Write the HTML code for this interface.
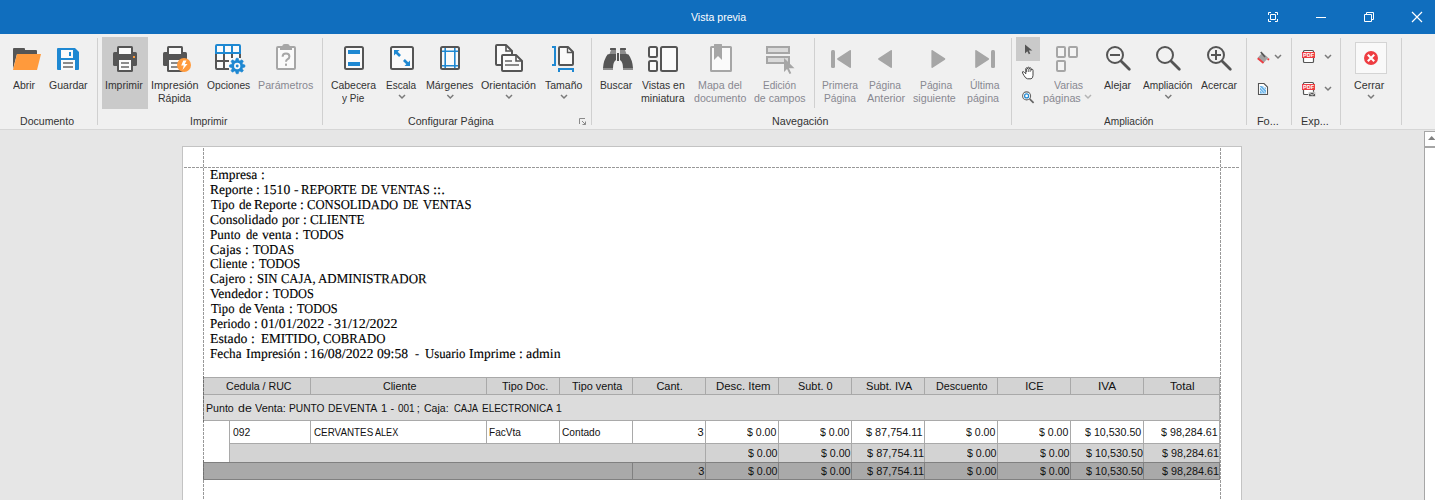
<!DOCTYPE html>
<html lang="es">
<head>
<meta charset="utf-8">
<title>Vista previa</title>
<style>
html,body{margin:0;padding:0;}
body{width:1435px;height:500px;overflow:hidden;position:relative;background:#e6e6e6;font-family:"Liberation Sans",sans-serif;font-size:11px;color:#2b2b2b;}
*{box-sizing:border-box;}
#title{position:absolute;left:0;top:0;width:1435px;height:34px;background:#106ebe;}
svg{position:absolute;top:0;left:0;overflow:visible;}
#ribbon{position:absolute;left:0;top:34px;width:1435px;height:96px;background:#f0f0f0;border-bottom:1px solid #d6d6d6;}
.sep{position:absolute;width:1px;background:#d0d0d0;top:38px;height:87px;}
.sep.s{height:70px;}
.sel{position:absolute;background:#cacaca;}
.s{position:absolute;display:inline-block;transform-origin:0 0;white-space:pre;font-size:11px;line-height:13px;height:13px;letter-spacing:0;}
.lb{color:#333;}
.dis{color:#888890;}
.tt{color:#fff;}
.tx{color:#111;}
#page{position:absolute;left:182px;top:146px;width:1060px;height:400px;background:#fff;border:1px solid #c3c3c3;}
.rl{position:absolute;left:210px;width:400px;height:15px;font-family:"Liberation Serif",serif;font-size:13.65px;line-height:15px;color:#000;white-space:nowrap;letter-spacing:0;word-spacing:0;-webkit-text-stroke:.14px #000;}
.rl span{position:absolute;top:0;display:inline-block;transform-origin:0 0;}
.c{position:absolute;border:1px solid #a9a9a9;}
#sb{position:absolute;left:1424px;top:131px;width:11px;height:369px;background:#fff;border-left:1px solid #a6a6a6;border-top:1px solid #a6a6a6;}
</style>
</head>
<body>
<div id="title">
<svg width="1435" height="34" viewBox="0 0 1435 34" fill="none" stroke="#fff" stroke-width="1">
<path d="M1268.500 15v-2.500h2.500M1275 12.500h2.500v2.500M1277.500 19v2.500h-2.500M1271 21.500h-2.500v-2.500M1270.500 14.500h5v5h-5z"/>
<path d="M1316 17.500h10"/>
<path d="M1364.500 14.500h7v7h-7zM1366.500 14.500v-2h7v7h-2"/>
<path d="M1412 12l10 10M1422 12l-10 10" stroke-width="1.200"/>
</svg>
</div>
<div id="ribbon"></div>
<div class="sep" style="left:97px"></div>
<div class="sep" style="left:322px"></div>
<div class="sep" style="left:591px"></div>
<div class="sep" style="left:1011px"></div>
<div class="sep" style="left:1246px"></div>
<div class="sep" style="left:1291px"></div>
<div class="sep" style="left:1340px"></div>
<div class="sep" style="left:1401px"></div>
<div class="sep s" style="left:814px"></div>
<div class="sel" style="left:102px;top:37px;width:46px;height:72px"></div>
<div class="sel" style="left:1016px;top:37px;width:24px;height:24px"></div>
<div style="position:absolute;left:1355px;top:42px;width:32px;height:32px;background:#f9f9f9;border:1px solid #d4d4d4"></div>
<span class="s tt" style="left:690.99px;top:11px;transform:scaleX(0.961);">Vista previa</span>
<span class="s lb" style="left:12.84px;top:79px;transform:scaleX(0.951);">Abrir</span>
<span class="s lb" style="left:49.41px;top:79px;transform:scaleX(0.956);">Guardar</span>
<span class="s lb" style="left:104.52px;top:79px;transform:scaleX(0.949);">Imprimir</span>
<span class="s lb" style="left:151.29px;top:79px;transform:scaleX(0.986);">Impresión</span>
<span class="s lb" style="left:158.40px;top:91.5px;transform:scaleX(0.952);">Rápida</span>
<span class="s lb" style="left:206.69px;top:79px;transform:scaleX(0.930);">Opciones</span>
<span class="s lb dis" style="left:258.39px;top:79px;transform:scaleX(0.973);">Parámetros</span>
<span class="s lb" style="left:330.85px;top:79px;transform:scaleX(0.946);">Cabecera</span>
<span class="s lb" style="left:342.08px;top:91.5px;transform:scaleX(0.909);">y Pie</span>
<span class="s lb" style="left:386.03px;top:79px;transform:scaleX(0.907);">Escala</span>
<span class="s lb" style="left:426.40px;top:79px;transform:scaleX(0.968);">Márgenes</span>
<span class="s lb" style="left:481.27px;top:79px;transform:scaleX(0.975);">Orientación</span>
<span class="s lb" style="left:544.72px;top:79px;transform:scaleX(0.954);">Tamaño</span>
<span class="s lb" style="left:600.02px;top:79px;transform:scaleX(0.937);">Buscar</span>
<span class="s lb" style="left:641.85px;top:79px;transform:scaleX(0.948);">Vistas en</span>
<span class="s lb" style="left:641.47px;top:91.5px;transform:scaleX(0.962);">miniatura</span>
<span class="s lb dis" style="left:697.91px;top:79px;transform:scaleX(0.971);">Mapa del</span>
<span class="s lb dis" style="left:693.91px;top:91.5px;transform:scaleX(0.961);">documento</span>
<span class="s lb dis" style="left:763.44px;top:79px;transform:scaleX(0.915);">Edición</span>
<span class="s lb dis" style="left:754.30px;top:91.5px;transform:scaleX(0.958);">de campos</span>
<span class="s lb dis" style="left:821.92px;top:79px;transform:scaleX(0.936);">Primera</span>
<span class="s lb dis" style="left:823.92px;top:91.5px;transform:scaleX(0.930);">Página</span>
<span class="s lb dis" style="left:868.92px;top:79px;transform:scaleX(0.930);">Página</span>
<span class="s lb dis" style="left:866.94px;top:91.5px;transform:scaleX(0.992);">Anterior</span>
<span class="s lb dis" style="left:919.69px;top:79px;transform:scaleX(0.938);">Página</span>
<span class="s lb dis" style="left:913.13px;top:91.5px;transform:scaleX(0.972);">siguiente</span>
<span class="s lb dis" style="left:969.67px;top:79px;transform:scaleX(0.947);">Última</span>
<span class="s lb dis" style="left:967.29px;top:91.5px;transform:scaleX(0.969);">página</span>
<span class="s lb dis" style="left:1053.83px;top:79px;transform:scaleX(0.959);">Varias</span>
<span class="s lb dis" style="left:1043.39px;top:91.5px;transform:scaleX(0.980);">páginas</span>
<span class="s lb" style="left:1103.80px;top:79px;transform:scaleX(0.965);">Alejar</span>
<span class="s lb" style="left:1142.88px;top:79px;transform:scaleX(0.920);">Ampliación</span>
<span class="s lb" style="left:1200.89px;top:79px;transform:scaleX(0.950);">Acercar</span>
<span class="s lb" style="left:1354.32px;top:79px;transform:scaleX(0.969);">Cerrar</span>
<span class="s lb" style="left:19.99px;top:115px;transform:scaleX(0.960);">Documento</span>
<span class="s lb" style="left:190.28px;top:115px;transform:scaleX(0.941);">Imprimir</span>
<span class="s lb" style="left:408.42px;top:115px;transform:scaleX(0.967);">Configurar Página</span>
<span class="s lb" style="left:771.95px;top:115px;transform:scaleX(0.972);">Navegación</span>
<span class="s lb" style="left:1103.88px;top:115px;transform:scaleX(0.920);">Ampliación</span>
<span class="s lb" style="left:1256.90px;top:115px;">Fo...</span>
<span class="s lb" style="left:1300.91px;top:115px;transform:scaleX(0.984);">Exp...</span>

<svg width="1435" height="130" viewBox="0 0 1435 130">
<path d="M399 95.0l3 3 3-3" fill="none" stroke="#7a7a7a" stroke-width="1.5"/>
<path d="M447.3 95.0l3 3 3-3" fill="none" stroke="#7a7a7a" stroke-width="1.5"/>
<path d="M506 95.0l3 3 3-3" fill="none" stroke="#7a7a7a" stroke-width="1.5"/>
<path d="M561 95.0l3 3 3-3" fill="none" stroke="#7a7a7a" stroke-width="1.5"/>
<path d="M1165.3 95.0l3 3 3-3" fill="none" stroke="#7a7a7a" stroke-width="1.5"/>
<path d="M1368 95.0l3 3 3-3" fill="none" stroke="#7a7a7a" stroke-width="1.5"/>
<path d="M1085 95.0l3 3 3-3" fill="none" stroke="#b4b4b4" stroke-width="1.5"/>
<path d="M1275 55.0l3 3 3-3" fill="none" stroke="#7a7a7a" stroke-width="1.5"/>
<path d="M1325 55.0l3 3 3-3" fill="none" stroke="#7a7a7a" stroke-width="1.5"/>
<path d="M1325 87.0l3 3 3-3" fill="none" stroke="#7a7a7a" stroke-width="1.5"/>
<path d="M579.500 124v-5.500h5.500M582 121l3.500 3.500M585.500 121.500v3h-3" fill="none" stroke="#8a8a8a" stroke-width="1"/>
<path d="M13 69V49q0-1 1-1h10q1 0 1 1v1h11q1 0 1 1v3H17z" fill="#555555"/>
<path d="M13 70l4-16h24l-4 16z" fill="#ff9a3c"/>
<path d="M58 48h17l4 4v17q0 1-1 1H58q-1 0-1-1V49q0-1 1-1z" fill="#1e88d2"/>
<rect x="61" y="50" width="12" height="8" fill="#fafafa"/><rect x="69" y="52" width="2" height="4" fill="#1e88d2"/>
<rect x="61" y="60" width="14" height="10" fill="#fafafa"/><rect x="63" y="62" width="10" height="2" fill="#8a8a8a"/><rect x="63" y="66" width="10" height="2" fill="#8a8a8a"/>
<g transform="translate(113 0)">
<rect x="0" y="52" width="24" height="14" rx="1.500" fill="#555555"/>
<rect x="4" y="46" width="16" height="9" rx="1.500" fill="#555555"/><rect x="6" y="48" width="12" height="6" fill="#fafafa"/>
<rect x="4" y="58" width="16" height="14" rx="1.500" fill="#555555"/><rect x="6" y="60" width="12" height="10" fill="#fafafa"/>
<rect x="8" y="62" width="8" height="2" fill="#8a8a8a"/><rect x="8" y="66" width="8" height="2" fill="#8a8a8a"/>
</g>
<rect x="133" y="56" width="2" height="2" fill="#ff9a3c"/>
<g transform="translate(163 0)">
<rect x="0" y="52" width="24" height="14" rx="1.500" fill="#555555"/>
<rect x="4" y="46" width="16" height="9" rx="1.500" fill="#555555"/><rect x="6" y="48" width="12" height="6" fill="#fafafa"/>
<rect x="4" y="58" width="16" height="14" rx="1.500" fill="#555555"/><rect x="6" y="60" width="12" height="10" fill="#fafafa"/>
<rect x="8" y="62" width="8" height="2" fill="#8a8a8a"/><rect x="8" y="66" width="8" height="2" fill="#8a8a8a"/>
</g>
<circle cx="184" cy="65" r="7" fill="#ff9a3c"/><path d="M183.300 60.500h3.200l-1.700 3.400h2.700l-5 6.200 1.300-4.600h-2.600z" fill="#fff"/>
<rect x="216" y="45" width="24" height="24" fill="#fafafa"/>
<path d="M216 54v14q0 1 1 1h12M224 54v15M216 61h13M232 54v4M240 54v4" fill="none" stroke="#555555" stroke-width="2"/>
<path d="M217 45h22q1 0 1 1v7h-24v-7q0-1 1-1zM224 45v8M232 45v8" fill="none" stroke="#1e88d2" stroke-width="2"/>
<path d="M235.52 60.55L236.19 58.27L238.21 58.27L238.88 60.55L239.86 60.96L241.95 59.82L243.38 61.25L242.24 63.34L242.65 64.32L244.93 64.99L244.93 67.01L242.65 67.68L242.24 68.66L243.38 70.75L241.95 72.18L239.86 71.04L238.88 71.45L238.21 73.73L236.19 73.73L235.52 71.45L234.54 71.04L232.45 72.18L231.02 70.75L232.16 68.66L231.75 67.68L229.47 67.01L229.47 64.99L231.75 64.32L232.16 63.34L231.02 61.25L232.45 59.82L234.54 60.96z" fill="#1e88d2" stroke="#1e88d2" stroke-width=".6" stroke-linejoin="round"/>
<circle cx="237.200" cy="66" r="2.300" fill="none" stroke="#fafafa" stroke-width="1.700"/>
<rect x="277" y="47" width="18" height="22" rx="1" fill="#fafafa" stroke="#a6a6a6" stroke-width="2"/>
<path d="M280 50v-2.500q0-.5.500-.5h1.700q0-3 2.500-3h2.600q2.500 0 2.500 3h1.700q.5 0 .5.500v2.500z" fill="#a6a6a6"/>
<path d="M282.600 56.800q0-3.300 3.400-3.300t3.400 3q0 1.700-1.700 2.600t-1.700 2.700" fill="none" stroke="#a6a6a6" stroke-width="2"/><rect x="285" y="63.600" width="2" height="2.200" fill="#a6a6a6"/>
<rect x="345" y="47" width="18" height="22" rx="1.500" fill="#fafafa" stroke="#555555" stroke-width="2"/>
<rect x="348" y="50" width="12" height="4" fill="#1e88d2"/><rect x="348" y="62" width="12" height="4" fill="#1e88d2"/>
<rect x="391" y="47" width="22" height="22" rx="1.500" fill="#fafafa" stroke="#555555" stroke-width="2"/>
<path d="M394 50h5.500l-1.800 1.800 3.300 3.300-1.900 1.900-3.300-3.300-1.800 1.800zM410 66h-5.500l1.800-1.800-3.300-3.300 1.900-1.900 3.300 3.300 1.800-1.800z" fill="#1e88d2"/>
<rect x="441" y="47" width="18" height="22" rx="1.500" fill="#fafafa" stroke="#555555" stroke-width="2"/>
<path d="M445.200 48v20M454.800 48v20M442 51.200h16M442 65.800h16" fill="none" stroke="#1e88d2" stroke-width="1.600"/>
<path d="M497 45h9l6 6v13q0 1-1 1h-14q-1 0-1-1V46q0-1 1-1z" fill="#fafafa" stroke="#555555" stroke-width="2" stroke-linejoin="round"/><path d="M506 45v6h6" fill="none" stroke="#555555" stroke-width="1.600"/>
<path d="M503 55h13l6 6v9q0 1-1 1h-18q-1 0-1-1V56q0-1 1-1z" fill="#fafafa" stroke="#555555" stroke-width="2" stroke-linejoin="round"/><path d="M516 55v6h6" fill="none" stroke="#555555" stroke-width="1.600"/>
<rect x="505" y="60" width="7" height="2" fill="#8a8a8a"/><rect x="505" y="64" width="14" height="2" fill="#8a8a8a"/>
<path d="M560 47h8l5 5v12q0 1-1 1h-12q-1 0-1-1V48q0-1 1-1z" fill="#fafafa" stroke="#555555" stroke-width="2" stroke-linejoin="round"/><path d="M567.500 47v5.500h5.500" fill="none" stroke="#555555" stroke-width="1.400"/>
<path d="M552 47h3v18h-3M559 72v-3h14v3" fill="none" stroke="#1e88d2" stroke-width="2"/>
<g transform="">
<rect x="610" y="48" width="6" height="2" rx=".5" fill="#555555"/>
<path d="M611 50h5v4h-6.500z" fill="#8c8c8c"/>
<path d="M609.500 54h6.500v6q-3 2-3 8h-10q.5-8 4.500-13.500q.8-.5 2-.5z" fill="#555555"/>
<rect x="603" y="68" width="10" height="2" fill="#8c8c8c"/>
</g>
<g transform="translate(1236 0) scale(-1 1)">
<rect x="610" y="48" width="6" height="2" rx=".5" fill="#555555"/>
<path d="M611 50h5v4h-6.500z" fill="#8c8c8c"/>
<path d="M609.500 54h6.500v6q-3 2-3 8h-10q.5-8 4.500-13.500q.8-.5 2-.5z" fill="#555555"/>
<rect x="603" y="68" width="10" height="2" fill="#8c8c8c"/>
</g>
<rect x="617" y="53" width="2" height="8" fill="#555555"/>
<rect x="649" y="47" width="8" height="10" rx="1.500" fill="#fafafa" stroke="#555555" stroke-width="2"/>
<rect x="649" y="61" width="8" height="10" rx="1.500" fill="#fafafa" stroke="#555555" stroke-width="2"/>
<rect x="661" y="47" width="16" height="24" rx="1.500" fill="#fafafa" stroke="#555555" stroke-width="2"/>
<rect x="711" y="47" width="20" height="24" rx=".5" fill="#fafafa" stroke="#a6a6a6" stroke-width="2"/>
<path d="M714 44.500q0-.5.500-.5h7q.5 0 .5.500V60l-4-4-4 4z" fill="#a6a6a6"/>
<rect x="767" y="47" width="22" height="6" fill="#dadada" stroke="#a6a6a6" stroke-width="2"/>
<rect x="767" y="57" width="22" height="6" fill="#dadada" stroke="#a6a6a6" stroke-width="2"/>
<path d="M784 58v14l3-3 2.500 5 1.800-.8-2.400-5h5.600z" fill="#a6a6a6"/>
<rect x="831" y="50" width="4" height="18" rx="1.500" fill="#a6a6a6"/>
<path d="M837.9000000000001 59l12.300-8.200v16.400z" fill="#a6a6a6" stroke="#a6a6a6" stroke-width="1.600" stroke-linejoin="round"/>
<path d="M878.9000000000001 59l12.300-8.200v16.400z" fill="#a6a6a6" stroke="#a6a6a6" stroke-width="1.600" stroke-linejoin="round"/>
<path d="M944.5 59l-12.300-8.200v16.400z" fill="#a6a6a6" stroke="#a6a6a6" stroke-width="1.600" stroke-linejoin="round"/>
<path d="M988.3 59l-12.300-8.200v16.400z" fill="#a6a6a6" stroke="#a6a6a6" stroke-width="1.600" stroke-linejoin="round"/>
<rect x="991" y="50" width="4" height="18" rx="1.500" fill="#a6a6a6"/>
<path d="M1025 44.500v9l2.300-2.200 1.500 3 1.500-.7-1.500-3h3.500z" fill="#555555"/>
<path d="M1024.500 72.500q-1.500-1.500-2-.7t1.500 3.700q1.500 3 3.500 3.300h3.500q2-.5 2-3.500v-5q0-1-.9-1t-.9 1v-1.500q0-1-.9-1t-.9 1v-.600q0-1-.9-1t-.9 1v.600q0-1-.9-1t-.9 1v5z" fill="#fff" stroke="#444" stroke-width="1"/>
<path d="M1026.500 69v3M1028.300 68.500v3.500M1030.100 69v3" fill="none" stroke="#444" stroke-width=".8"/>
<path d="M1029.600 98.900l4 4" stroke="#666" stroke-width="1.700" fill="none"/><circle cx="1026.600" cy="95.900" r="4" fill="#fff" stroke="#666" stroke-width="1.100"/><circle cx="1026.600" cy="95.900" r="2" fill="none" stroke="#1e88d2" stroke-width="1.200"/>
<rect x="1057" y="47" width="8" height="10" rx="1" fill="#f4f4f4" stroke="#a6a6a6" stroke-width="2"/>
<rect x="1069" y="47" width="8" height="10" rx="1" fill="#f4f4f4" stroke="#a6a6a6" stroke-width="2"/>
<rect x="1057" y="61" width="8" height="10" rx="1" fill="#f4f4f4" stroke="#a6a6a6" stroke-width="2"/>
<path d="M1121 61l8.300 8.300" stroke="#555555" stroke-width="2.800" stroke-linecap="round" fill="none"/>
<circle cx="1115" cy="55" r="8" fill="#f2f2f2" stroke="#555555" stroke-width="2"/>
<rect x="1110" y="54" width="10" height="2" fill="#555555"/>
<path d="M1171 61l8.300 8.300" stroke="#555555" stroke-width="2.800" stroke-linecap="round" fill="none"/>
<circle cx="1165" cy="55" r="8" fill="#f2f2f2" stroke="#555555" stroke-width="2"/>
<path d="M1222 61l8.300 8.300" stroke="#555555" stroke-width="2.800" stroke-linecap="round" fill="none"/>
<circle cx="1216" cy="55" r="8" fill="#f2f2f2" stroke="#555555" stroke-width="2"/>
<rect x="1211" y="54" width="10" height="2" fill="#555555"/>
<rect x="1215" y="50" width="2" height="10" fill="#555555"/>
<path d="M1262.300 52.800l6 5-4.800 5.200-6-5z" fill="#a2a2a2"/><path d="M1260.800 52l4.200 5" stroke="#555555" stroke-width="1.600" fill="none"/><path d="M1257.700 58.200l5.800 4.800" stroke="#ee3d42" stroke-width="1.800" fill="none"/><circle cx="1268.300" cy="59.300" r="1.100" fill="#ee3d42"/>
<path d="M1258.500 83.500h5.500l3.500 3.500v7.500h-9z" fill="#fff" stroke="#555555" stroke-width="1.100"/><path d="M1260 86h3.500v1.500h2.500v6h-6z" fill="#6ab4ea"/><path d="M1260 87l5.500 6M1260 90l3 3.500M1262.500 86l3.500 4" stroke="#fff" stroke-width=".7" fill="none"/>
<rect x="1303.500" y="50.5" width="10" height="12" rx="1" fill="#fff" stroke="#555555" stroke-width="1.200"/>
<rect x="1302" y="52" width="13" height="6" fill="#ee3d42"/>
<text x="1308.500" y="57.2" font-family="Liberation Sans,sans-serif" font-size="5.500" font-weight="bold" fill="#fff" text-anchor="middle" textLength="11" lengthAdjust="spacingAndGlyphs">PDF</text>
<rect x="1303.500" y="82.5" width="10" height="12" rx="1" fill="#fff" stroke="#555555" stroke-width="1.200"/>
<rect x="1302" y="84" width="13" height="6" fill="#ee3d42"/>
<text x="1308.500" y="89.2" font-family="Liberation Sans,sans-serif" font-size="5.500" font-weight="bold" fill="#fff" text-anchor="middle" textLength="11" lengthAdjust="spacingAndGlyphs">PDF</text>
<rect x="1308.600" y="92.2" width="7" height="4.500" fill="#555555" stroke="#f0f0f0" stroke-width=".8"/><path d="M1309 92.9l3.100 2.200 3.100-2.200" stroke="#fff" stroke-width=".8" fill="none"/>
<circle cx="1371" cy="58" r="7" fill="#ee3d42"/><path d="M1367.800 54.800l6.400 6.400M1374.200 54.800l-6.400 6.400" stroke="#fff" stroke-width="2.100" fill="none"/>
</svg>
<div id="page"></div>
<div class="rl" style="top:167.12px"><span style="left:-0.22px;transform:matrix(0.992,.002,0,1,0,0);">Empresa</span> <span style="left:51.20px;transform:matrix(1.000,.002,0,1,0,0);">:</span></div>
<div class="rl" style="top:182.12px"><span style="left:-0.24px;transform:matrix(0.988,.002,0,1,0,0);">Reporte</span> <span style="left:46.20px;transform:matrix(1.000,.002,0,1,0,0);">:</span> <span style="left:52.91px;transform:matrix(0.998,.002,0,1,0,0);">1510</span> <span style="left:83.70px;transform:matrix(1.000,.002,0,1,0,0);">-</span> <span style="left:91.08px;transform:matrix(0.934,.002,0,1,0,0);">REPORTE</span> <span style="left:150.76px;transform:matrix(0.911,.002,0,1,0,0);">DE</span> <span style="left:171.02px;transform:matrix(0.925,.002,0,1,0,0);">VENTAS</span> <span style="left:222.72px;transform:matrix(1.075,.002,0,1,0,0);">::.</span></div>
<div class="rl" style="top:197.12px"><span style="left:0.74px;transform:matrix(0.928,.002,0,1,0,0);">Tipo</span> <span style="left:28.52px;transform:matrix(0.970,.002,0,1,0,0);">de</span> <span style="left:44.14px;transform:matrix(0.988,.002,0,1,0,0);">Reporte</span> <span style="left:90.20px;transform:matrix(1.000,.002,0,1,0,0);">:</span> <span style="left:97.44px;transform:matrix(0.926,.002,0,1,0,0);">CONSOLIDADO</span> <span style="left:192.98px;transform:matrix(0.850,.002,0,1,0,0);">DE</span> <span style="left:212.64px;transform:matrix(0.922,.002,0,1,0,0);">VENTAS</span></div>
<div class="rl" style="top:212.12px"><span style="left:0.01px;transform:matrix(0.985,.002,0,1,0,0);">Consolidado</span> <span style="left:71.52px;transform:matrix(0.945,.002,0,1,0,0);">por</span> <span style="left:93.13px;transform:matrix(1.000,.002,0,1,0,0);">:</span> <span style="left:100.40px;transform:matrix(0.961,.002,0,1,0,0);">CLIENTE</span></div>
<div class="rl" style="top:227.12px"><span style="left:-0.05px;transform:matrix(0.962,.002,0,1,0,0);">Punto</span> <span style="left:35.51px;transform:matrix(0.929,.002,0,1,0,0);">de</span> <span style="left:51.53px;transform:matrix(1.000,.002,0,1,0,0);">venta</span> <span style="left:85.30px;transform:matrix(1.000,.002,0,1,0,0);">:</span> <span style="left:92.81px;transform:matrix(0.906,.002,0,1,0,0);">TODOS</span></div>
<div class="rl" style="top:242.12px"><span style="left:0.35px;transform:matrix(1.033,.002,0,1,0,0);">Cajas</span> <span style="left:35.40px;transform:matrix(1.000,.002,0,1,0,0);">:</span> <span style="left:43.05px;transform:matrix(0.912,.002,0,1,0,0);">TODAS</span></div>
<div class="rl" style="top:256.12px"><span style="left:0.22px;transform:matrix(0.946,.002,0,1,0,0);">Cliente</span> <span style="left:41.30px;transform:matrix(1.000,.002,0,1,0,0);">:</span> <span style="left:49.03px;transform:matrix(0.912,.002,0,1,0,0);">TODOS</span></div>
<div class="rl" style="top:271.12px"><span style="left:0.36px;transform:matrix(0.977,.002,0,1,0,0);">Cajero</span> <span style="left:39.30px;transform:matrix(1.000,.002,0,1,0,0);">:</span> <span style="left:47.35px;transform:matrix(0.935,.002,0,1,0,0);">SIN</span> <span style="left:71.41px;transform:matrix(0.920,.002,0,1,0,0);">CAJA,</span> <span style="left:108.26px;transform:matrix(0.950,.002,0,1,0,0);">ADMINISTRADOR</span></div>
<div class="rl" style="top:286.12px"><span style="left:0.44px;transform:matrix(0.998,.002,0,1,0,0);">Vendedor</span> <span style="left:55.30px;transform:matrix(1.000,.002,0,1,0,0);">:</span> <span style="left:63.33px;transform:matrix(0.901,.002,0,1,0,0);">TODOS</span></div>
<div class="rl" style="top:301.12px"><span style="left:0.74px;transform:matrix(0.928,.002,0,1,0,0);">Tipo</span> <span style="left:28.52px;transform:matrix(0.970,.002,0,1,0,0);">de</span> <span style="left:44.41px;transform:matrix(0.982,.002,0,1,0,0);">Venta</span> <span style="left:79.30px;transform:matrix(1.000,.002,0,1,0,0);">:</span> <span style="left:86.92px;transform:matrix(0.900,.002,0,1,0,0);">TODOS</span></div>
<div class="rl" style="top:316.12px"><span style="left:0.08px;transform:matrix(0.948,.002,0,1,0,0);">Periodo</span> <span style="left:44.30px;transform:matrix(1.000,.002,0,1,0,0);">:</span> <span style="left:50.57px;transform:matrix(1.016,.002,0,1,0,0);">01/01/2022</span> <span style="left:117.57px;transform:matrix(0.746,.002,0,1,0,0);">-</span> <span style="left:124.34px;transform:matrix(1.021,.002,0,1,0,0);">31/12/2022</span></div>
<div class="rl" style="top:331.12px"><span style="left:0.39px;transform:matrix(1.006,.002,0,1,0,0);">Estado</span> <span style="left:41.20px;transform:matrix(1.000,.002,0,1,0,0);">:</span> <span style="left:51.31px;transform:matrix(0.967,.002,0,1,0,0);">EMITIDO,</span> <span style="left:113.43px;transform:matrix(0.937,.002,0,1,0,0);">COBRADO</span></div>
<div class="rl" style="top:346.12px"><span style="left:0.28px;transform:matrix(0.971,.002,0,1,0,0);">Fecha</span> <span style="left:35.72px;transform:matrix(0.986,.002,0,1,0,0);">Impresión</span> <span style="left:94.10px;transform:matrix(1.000,.002,0,1,0,0);">:</span> <span style="left:100.05px;transform:matrix(1.022,.002,0,1,0,0);">16/08/2022</span> <span style="left:167.27px;transform:matrix(0.997,.002,0,1,0,0);">09:58</span> <span style="left:204.98px;transform:matrix(0.905,.002,0,1,0,0);">-</span> <span style="left:214.61px;transform:matrix(0.937,.002,0,1,0,0);">Usuario</span> <span style="left:259.44px;transform:matrix(0.989,.002,0,1,0,0);">Imprime</span> <span style="left:309.30px;transform:matrix(1.000,.002,0,1,0,0);">:</span> <span style="left:316.02px;transform:matrix(1.013,.002,0,1,0,0);">admin</span></div>
<div class="c" style="left:203px;top:377px;width:108px;height:18px;background:#d3d3d3;"></div>
<div class="c" style="left:310px;top:377px;width:177px;height:18px;background:#d3d3d3;"></div>
<div class="c" style="left:486px;top:377px;width:74px;height:18px;background:#d3d3d3;"></div>
<div class="c" style="left:559px;top:377px;width:74px;height:18px;background:#d3d3d3;"></div>
<div class="c" style="left:632px;top:377px;width:74px;height:18px;background:#d3d3d3;"></div>
<div class="c" style="left:705px;top:377px;width:74px;height:18px;background:#d3d3d3;"></div>
<div class="c" style="left:778px;top:377px;width:74px;height:18px;background:#d3d3d3;"></div>
<div class="c" style="left:851px;top:377px;width:74px;height:18px;background:#d3d3d3;"></div>
<div class="c" style="left:924px;top:377px;width:74px;height:18px;background:#d3d3d3;"></div>
<div class="c" style="left:997px;top:377px;width:74px;height:18px;background:#d3d3d3;"></div>
<div class="c" style="left:1070px;top:377px;width:74px;height:18px;background:#d3d3d3;"></div>
<div class="c" style="left:1143px;top:377px;width:77px;height:18px;background:#d3d3d3;"></div>

<div class="c" style="left:203px;top:394px;width:1017px;height:27px;background:#dcdcdc;"></div>

<div class="c" style="left:229px;top:420px;width:82px;height:24px;background:#fff;"></div>
<div class="c" style="left:310px;top:420px;width:177px;height:24px;background:#fff;"></div>
<div class="c" style="left:486px;top:420px;width:74px;height:24px;background:#fff;"></div>
<div class="c" style="left:559px;top:420px;width:74px;height:24px;background:#fff;"></div>
<div class="c" style="left:632px;top:420px;width:74px;height:24px;background:#fff;"></div>
<div class="c" style="left:705px;top:420px;width:74px;height:24px;background:#fff;"></div>
<div class="c" style="left:778px;top:420px;width:74px;height:24px;background:#fff;"></div>
<div class="c" style="left:851px;top:420px;width:74px;height:24px;background:#fff;"></div>
<div class="c" style="left:924px;top:420px;width:74px;height:24px;background:#fff;"></div>
<div class="c" style="left:997px;top:420px;width:74px;height:24px;background:#fff;"></div>
<div class="c" style="left:1070px;top:420px;width:74px;height:24px;background:#fff;"></div>
<div class="c" style="left:1143px;top:420px;width:77px;height:24px;background:#fff;"></div>

<div class="c" style="left:229px;top:443px;width:477px;height:20px;background:#d3d3d3;"></div>
<div class="c" style="left:705px;top:443px;width:74px;height:20px;background:#d3d3d3;"></div>
<div class="c" style="left:778px;top:443px;width:74px;height:20px;background:#d3d3d3;"></div>
<div class="c" style="left:851px;top:443px;width:74px;height:20px;background:#d3d3d3;"></div>
<div class="c" style="left:924px;top:443px;width:74px;height:20px;background:#d3d3d3;"></div>
<div class="c" style="left:997px;top:443px;width:74px;height:20px;background:#d3d3d3;"></div>
<div class="c" style="left:1070px;top:443px;width:74px;height:20px;background:#d3d3d3;"></div>
<div class="c" style="left:1143px;top:443px;width:77px;height:20px;background:#d3d3d3;"></div>

<div class="c" style="left:203px;top:462px;width:430px;height:18px;background:#a9a9a9;border-color:#808080;"></div>
<div class="c" style="left:632px;top:462px;width:74px;height:18px;background:#a9a9a9;border-color:#808080;"></div>
<div class="c" style="left:705px;top:462px;width:74px;height:18px;background:#a9a9a9;border-color:#808080;"></div>
<div class="c" style="left:778px;top:462px;width:74px;height:18px;background:#a9a9a9;border-color:#808080;"></div>
<div class="c" style="left:851px;top:462px;width:74px;height:18px;background:#a9a9a9;border-color:#808080;"></div>
<div class="c" style="left:924px;top:462px;width:74px;height:18px;background:#a9a9a9;border-color:#808080;"></div>
<div class="c" style="left:997px;top:462px;width:74px;height:18px;background:#a9a9a9;border-color:#808080;"></div>
<div class="c" style="left:1070px;top:462px;width:74px;height:18px;background:#a9a9a9;border-color:#808080;"></div>
<div class="c" style="left:1143px;top:462px;width:77px;height:18px;background:#a9a9a9;border-color:#808080;"></div>

<span class="s tx" style="left:225.63px;top:380px;transform:scaleX(0.965);">Cedula / RUC</span>
<span class="s tx" style="left:383.35px;top:380px;transform:scaleX(0.974);">Cliente</span>
<span class="s tx" style="left:501.94px;top:380px;transform:scaleX(0.990);">Tipo Doc.</span>
<span class="s tx" style="left:571.83px;top:380px;transform:scaleX(0.988);">Tipo venta</span>
<span class="s tx" style="left:656.40px;top:380px;">Cant.</span>
<span class="s tx" style="left:715.91px;top:380px;transform:scaleX(1.038);">Desc. Item</span>
<span class="s tx" style="left:798.29px;top:380px;transform:scaleX(0.990);">Subt. 0</span>
<span class="s tx" style="left:865.87px;top:380px;transform:scaleX(1.010);">Subt. IVA</span>
<span class="s tx" style="left:935.92px;top:380px;transform:scaleX(0.977);">Descuento</span>
<span class="s tx" style="left:1025.27px;top:380px;">ICE</span>
<span class="s tx" style="left:1098.15px;top:380px;transform:scaleX(1.076);">IVA</span>
<span class="s tx" style="left:1170.30px;top:380px;transform:scaleX(1.060);">Total</span>
<span class="s tx" style="left:206.37px;top:402px;transform:scaleX(0.965);">Punto</span>
<span class="s tx" style="left:238.03px;top:402px;transform:scaleX(1.124);">de</span>
<span class="s tx" style="left:254.80px;top:402px;transform:scaleX(0.990);">Venta:</span>
<span class="s tx" style="left:289.03px;top:402px;transform:scaleX(0.927);">PUNTO</span>
<span class="s tx" style="left:327.58px;top:402px;transform:scaleX(0.940);">DE</span>
<span class="s tx" style="left:343.41px;top:402px;transform:scaleX(0.959);">VENTA</span>
<span class="s tx" style="left:381.10px;top:402px;">1</span>
<span class="s tx" style="left:390.55px;top:402px;">-</span>
<span class="s tx" style="left:398.28px;top:402px;transform:scaleX(0.903);">001</span>
<span class="s tx" style="left:416.80px;top:402px;">;</span>
<span class="s tx" style="left:424.37px;top:402px;transform:scaleX(0.959);">Caja:</span>
<span class="s tx" style="left:453.56px;top:402px;transform:scaleX(0.860);">CAJA</span>
<span class="s tx" style="left:482.04px;top:402px;transform:scaleX(0.907);">ELECTRONICA</span>
<span class="s tx" style="left:555.86px;top:402px;">1</span>
<span class="s tx" style="left:232.81px;top:426px;transform:scaleX(0.941);">092</span>
<span class="s tx" style="left:313.56px;top:426px;transform:scaleX(0.894);">CERVANTES</span>
<span class="s tx" style="left:375.42px;top:426px;transform:scaleX(0.825);">ALEX</span>
<span class="s tx" style="left:488.72px;top:426px;transform:scaleX(0.915);">FacVta</span>
<span class="s tx" style="left:562.21px;top:426px;transform:scaleX(0.924);">Contado</span>
<span class="s tx" style="left:697.50px;top:426px;">3</span>
<span class="s tx" style="left:747.35px;top:426px;transform:scaleX(0.959);">$ 0.00</span>
<span class="s tx" style="left:820.35px;top:426px;transform:scaleX(0.959);">$ 0.00</span>
<span class="s tx" style="left:866.08px;top:426px;transform:scaleX(0.989);">$ 87,754.11</span>
<span class="s tx" style="left:966.35px;top:426px;transform:scaleX(0.959);">$ 0.00</span>
<span class="s tx" style="left:1039.35px;top:426px;transform:scaleX(0.959);">$ 0.00</span>
<span class="s tx" style="left:1084.82px;top:426px;transform:scaleX(0.968);">$ 10,530.50</span>
<span class="s tx" style="left:1160.50px;top:426px;transform:scaleX(0.974);">$ 98,284.61</span>
<span class="s tx" style="left:748.21px;top:447px;transform:scaleX(0.965);">$ 0.00</span>
<span class="s tx" style="left:821.21px;top:447px;transform:scaleX(0.965);">$ 0.00</span>
<span class="s tx" style="left:866.65px;top:447px;transform:scaleX(0.995);">$ 87,754.11</span>
<span class="s tx" style="left:967.21px;top:447px;transform:scaleX(0.965);">$ 0.00</span>
<span class="s tx" style="left:1040.21px;top:447px;transform:scaleX(0.965);">$ 0.00</span>
<span class="s tx" style="left:1085.79px;top:447px;transform:scaleX(0.980);">$ 10,530.50</span>
<span class="s tx" style="left:1162.13px;top:447px;transform:scaleX(0.981);">$ 98,284.61</span>
<span class="s tx" style="left:698.20px;top:465px;">3</span>
<span class="s tx" style="left:748.21px;top:465px;transform:scaleX(0.965);">$ 0.00</span>
<span class="s tx" style="left:821.21px;top:465px;transform:scaleX(0.965);">$ 0.00</span>
<span class="s tx" style="left:866.65px;top:465px;transform:scaleX(0.995);">$ 87,754.11</span>
<span class="s tx" style="left:967.21px;top:465px;transform:scaleX(0.965);">$ 0.00</span>
<span class="s tx" style="left:1040.21px;top:465px;transform:scaleX(0.965);">$ 0.00</span>
<span class="s tx" style="left:1085.79px;top:465px;transform:scaleX(0.980);">$ 10,530.50</span>
<span class="s tx" style="left:1162.13px;top:465px;transform:scaleX(0.981);">$ 98,284.61</span>

<svg width="1435" height="500" viewBox="0 0 1435 500" shape-rendering="crispEdges" fill="none" stroke="#999" stroke-width="1" stroke-dasharray="3 1"><path d="M184 167.500H1240M203.500 148V500M1220.500 148V500"/><path d="M203.500 376V422M203.500 460V480" stroke="#707070"/><path d="M203 167.500h1M1220 167.500h1" stroke="#fff" stroke-dasharray="none"/></svg>
<div id="sb"></div><div style="position:absolute;left:1424px;top:146px;width:11px;height:2px;background:#a6a6a6"></div>
<svg width="1435" height="500" viewBox="0 0 1435 500"><path d="M1428 140l3.700-4 3.700 4z" fill="#808080"/></svg>
</body>
</html>
